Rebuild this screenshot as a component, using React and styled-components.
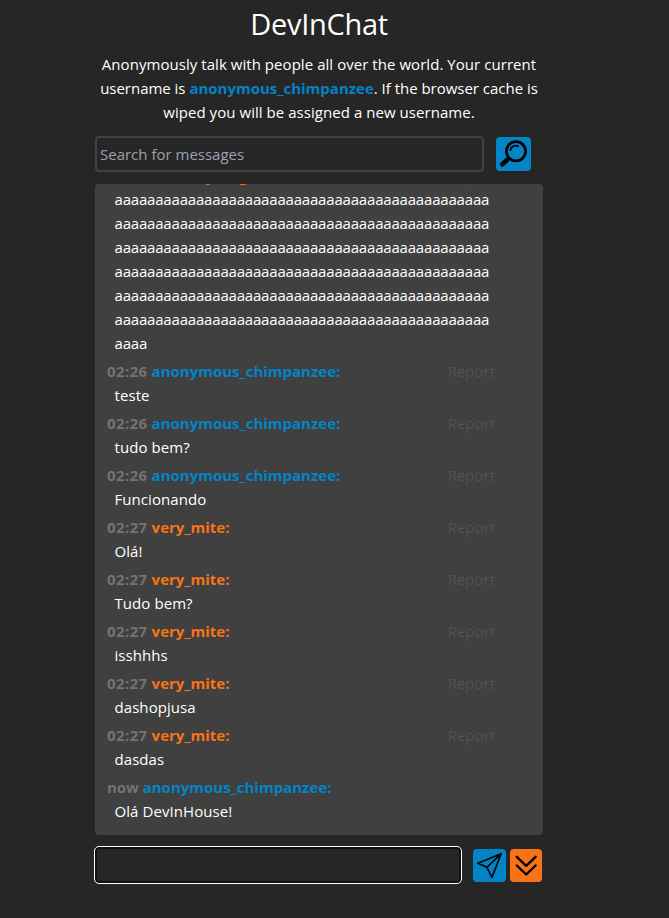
import React from "react";
import styled, { createGlobalStyle } from "styled-components";

const colors = {
  page: "#262626",
  panel: "#404040",
  muted: "#737373",
  faint: "#525252",
  blue: "#0284c7",
  orange: "#f97316",
};

const GlobalStyle = createGlobalStyle`
  * { box-sizing: border-box; }
  body {
    margin: 0;
    background: ${colors.page};
    color: #fff;
    font-family: "Open Sans", "Noto Sans", sans-serif;
    font-size: 15px;
    line-height: 24px;
  }
`;

const Page = styled.main`
  display: flex;
  flex-direction: column;
  width: 448px;
  height: 918px;
  margin-left: 95px;
  padding-top: 6px;
`;

const Title = styled.h1`
  margin: 0;
  text-align: center;
  font-size: 29px;
  font-weight: 400;
  line-height: 36px;
  letter-spacing: -0.3px;
`;

const Intro = styled.p`
  margin: 10px 0 0;
  text-align: center;
  white-space: nowrap;
`;

const IntroLine = styled.span`
  display: block;
  letter-spacing: ${(p) => (p.$tight ? -0.02 : 0.05)}px;
`;

const Username = styled.strong`
  font-weight: 700;
  letter-spacing: 0;
  color: ${(p) => (p.$mine ? colors.blue : colors.orange)};
`;

const SearchBar = styled.form`
  display: flex;
  align-items: center;
  gap: 12px;
  height: 36px;
  margin-top: 12px;
`;

const SearchInput = styled.input`
  width: 389px;
  height: 36px;
  padding: 0 3px;
  border: 2px solid ${colors.panel};
  border-radius: 4px;
  outline: none;
  background: transparent;
  color: #fff;
  font: inherit;
  &::placeholder { color: #9ca3af; opacity: 1; }
`;

const IconButton = styled.button`
  display: flex;
  align-items: center;
  justify-content: center;
  flex: none;
  width: ${(p) => p.$width}px;
  height: ${(p) => p.$height}px;
  padding: 0;
  border: 0;
  border-radius: 4px;
  background: ${(p) => (p.$accent ? colors.orange : colors.blue)};
  svg { display: block; }
`;

const Messages = styled.section`
  display: flex;
  flex-direction: column;
  justify-content: flex-end;
  gap: 4px;
  height: 651px;
  margin-top: 12px;
  padding: 0 48px 12px 12px;
  overflow: hidden;
  border-radius: 4px;
  background: ${colors.panel};
`;

const Message = styled.article`
  flex: none;
`;

const MessageHeader = styled.header`
  display: flex;
  height: 24px;
  line-height: ${(p) => (p.$long ? 26 : 24)}px;
  white-space: nowrap;
`;

const Time = styled.span`
  margin-right: 4px;
  font-weight: 700;
  letter-spacing: ${(p) => (p.$now ? -0.1 : 0.4)}px;
  color: ${colors.muted};
`;

const Report = styled.span`
  margin-left: auto;
  color: ${colors.faint};
`;

const MessageText = styled.p`
  width: 378px;
  margin: 0 0 0 7.5px;
  overflow-wrap: anywhere;
  letter-spacing: ${(p) => (p.$long ? -0.19 : 0.07)}px;
`;

const Composer = styled.form`
  display: flex;
  align-items: center;
  height: 38px;
  margin: 11px 0 0 -1px;
`;

const ComposerInput = styled.input`
  width: 368px;
  height: 38px;
  margin-right: 11px;
  padding: 0 6px;
  border: 1px solid #fff;
  border-radius: 5px;
  outline: none;
  background: transparent;
  box-shadow: inset 0 0 0 2px #101010;
  color: #fff;
  font: inherit;
`;

const SendGroup = styled.div`
  display: flex;
  gap: 4px;
`;

const SearchIcon = () => (
  <svg width="35" height="34" viewBox="0 0 35 34" fill="none" stroke="#000">
    <circle cx="20" cy="14.3" r="9.6" strokeWidth="2.7" />
    <path d="M14.4 13.2c.8-3.7 4.1-5.4 7.7-4.1" strokeWidth="1.7" strokeLinecap="round" />
    <path d="m13 21-3 3" strokeWidth="2.6" />
    <path d="m11 23-4.7 4.4" strokeWidth="4.6" strokeLinecap="round" />
  </svg>
);

const SendIcon = () => (
  <svg width="33" height="33" viewBox="0 0 33 33" fill="none" stroke="#000" strokeWidth="1.6" strokeLinejoin="round">
    <path d="M28.2 4.7 4.8 14.2l9.1 4.1 5 10.1 9.3-23.7ZM28.2 4.7 13.9 18.3" />
  </svg>
);

const ChevronsIcon = () => (
  <svg width="32" height="33" viewBox="0 0 32 33" fill="none" stroke="#000" strokeWidth="2.4" strokeLinecap="round" strokeLinejoin="round">
    <path d="m6.8 7.8 9.4 9 9.4-9M6.8 16.5l9.4 9 9.4-9" />
  </svg>
);

const me = "anonymous_chimpanzee";
const messages = [
  { time: "02:26", user: "crummy_dog", text: "a".repeat(46 * 6 + 4), report: true },
  { time: "02:26", user: me, text: "teste", report: true },
  { time: "02:26", user: me, text: "tudo bem?", report: true },
  { time: "02:26", user: me, text: "Funcionando", report: true },
  { time: "02:27", user: "very_mite", text: "Olá!", report: true },
  { time: "02:27", user: "very_mite", text: "Tudo bem?", report: true },
  { time: "02:27", user: "very_mite", text: "isshhhs", report: true },
  { time: "02:27", user: "very_mite", text: "dashopjusa", report: true },
  { time: "02:27", user: "very_mite", text: "dasdas", report: true },
  { time: "now", user: me, text: "Olá DevInHouse!", report: false },
];

const isLong = (m) => m.text.length > 100;

export default function App() {
  return (
    <>
      <GlobalStyle />
      <Page>
        <Title>DevInChat</Title>
        <Intro>
          <IntroLine>Anonymously talk with people all over the world. Your current</IntroLine>
          <IntroLine $tight>
            username is <Username $mine>{me}</Username>. If the browser cache is
          </IntroLine>
          <IntroLine>wiped you will be assigned a new username.</IntroLine>
        </Intro>
        <SearchBar>
          <SearchInput placeholder="Search for messages" />
          <IconButton type="button" aria-label="Search" $width={35} $height={34}>
            <SearchIcon />
          </IconButton>
        </SearchBar>
        <Messages>
          {messages.map((m, i) => (
            <Message key={i}>
              <MessageHeader $long={isLong(m)}>
                <Time $now={m.time === "now"}>{m.time}</Time>
                <Username $mine={m.user === me}>{m.user}:</Username>
                {m.report && <Report>Report</Report>}
              </MessageHeader>
              <MessageText $long={isLong(m)}>{m.text}</MessageText>
            </Message>
          ))}
        </Messages>
        <Composer>
          <ComposerInput aria-label="Message" />
          <SendGroup>
            <IconButton type="button" aria-label="Send" $width={33} $height={33}>
              <SendIcon />
            </IconButton>
            <IconButton type="button" aria-label="Scroll to latest" $accent $width={32} $height={33}>
              <ChevronsIcon />
            </IconButton>
          </SendGroup>
        </Composer>
      </Page>
    </>
  );
}
